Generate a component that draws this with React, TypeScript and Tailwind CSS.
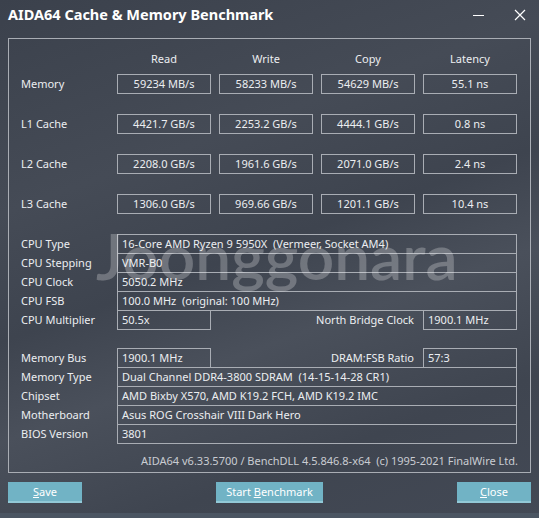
import React from "react";

const font = { fontFamily: '"Segoe UI", "Noto Sans", "Open Sans", sans-serif' };

const bench = [
  { name: "Memory", vals: ["59234 MB/s", "58233 MB/s", "54629 MB/s", "55.1 ns"] },
  { name: "L1 Cache", vals: ["4421.7 GB/s", "2253.2 GB/s", "4444.1 GB/s", "0.8 ns"] },
  { name: "L2 Cache", vals: ["2208.0 GB/s", "1961.6 GB/s", "2071.0 GB/s", "2.4 ns"] },
  { name: "L3 Cache", vals: ["1306.0 GB/s", "969.66 GB/s", "1201.1 GB/s", "10.4 ns"] },
];

const cpuRows = [
  ["CPU Type", "16-Core AMD Ryzen 9 5950X  (Vermeer, Socket AM4)"],
  ["CPU Stepping", "VMR-B0"],
  ["CPU Clock", "5050.2 MHz"],
  ["CPU FSB", "100.0 MHz  (original: 100 MHz)"],
];

const memRows = [
  ["Memory Type", "Dual Channel DDR4-3800 SDRAM  (14-15-14-28 CR1)"],
  ["Chipset", "AMD Bixby X570, AMD K19.2 FCH, AMD K19.2 IMC"],
  ["Motherboard", "Asus ROG Crosshair VIII Dark Hero"],
  ["BIOS Version", "3801"],
];

function Label({ children }: { children: React.ReactNode }) {
  return <div className="w-[96px] shrink-0 leading-[20px]">{children}</div>;
}

function InfoRow({ label, value, first }: { label: string; value: string; first?: boolean }) {
  return (
    <div className={`flex h-[20px] ${first ? "" : "-mt-px"}`}>
      <Label>{label}</Label>
      <div className="w-[400px] border border-[#a9adb4] pl-[4px] leading-[18px] whitespace-pre">{value}</div>
    </div>
  );
}

function Btn({ children, w }: { children: React.ReactNode; w: string }) {
  return (
    <div className={`${w} h-[21px] bg-[#71b3c5] border-b-2 border-[#92c9d7] text-white text-center leading-[19px]`}>
      {children}
    </div>
  );
}

export default function App() {
  return (
    <div
      className="relative w-[539px] h-[518px] overflow-hidden text-[11px] text-[#eceef1] bg-[linear-gradient(160deg,#3b414c_0%,#454b56_30%,#3e444f_48%,#4a505b_62%,#3f4550_80%,#434955_100%)]"
      style={font}
    >
      {/* title bar */}
      <div className="flex items-center h-[38px] pl-[8px] pr-[10px]">
        <div className="text-[14.5px] font-bold text-white pb-[8px]">AIDA64 Cache &amp; Memory Benchmark</div>
        <div className="ml-auto flex items-center gap-[30px] pb-[8px] text-white">
          <div className="w-[11px] h-px bg-white" />
          <svg width="12" height="12" viewBox="0 0 12 12" className="mr-[3px]">
            <path d="M1 1 L11 11 M11 1 L1 11" stroke="white" strokeWidth="1.2" />
          </svg>
        </div>
      </div>

      {/* main panel */}
      <div className="ml-[8px] w-[523px] h-[435px] border border-[#a9adb4] pl-[12px] pt-[11px]">
        <div className="flex h-[19px] items-center">
          <div className="w-[96px]" />
          <div className="flex gap-[8px]">
            {["Read", "Write", "Copy", "Latency"].map((h) => (
              <div key={h} className="w-[94px] text-center">{h}</div>
            ))}
          </div>
        </div>

        <div className="flex flex-col gap-[20px] mt-[5px]">
          {bench.map((r) => (
            <div key={r.name} className="flex h-[20px]">
              <Label>{r.name}</Label>
              <div className="flex gap-[8px]">
                {r.vals.map((v, i) => (
                  <div key={i} className="w-[94px] h-[20px] border border-[#a9adb4] text-center leading-[18px]">{v}</div>
                ))}
              </div>
            </div>
          ))}
        </div>

        <div className="mt-[20px]">
          {cpuRows.map((r, i) => (
            <InfoRow key={r[0]} label={r[0]} value={r[1]} first={i === 0} />
          ))}
          <div className="flex h-[20px] -mt-px">
            <Label>CPU Multiplier</Label>
            <div className="w-[94px] border border-[#a9adb4] pl-[4px] leading-[18px]">50.5x</div>
            <div className="w-[212px] text-right pr-[9px] leading-[20px]">North Bridge Clock</div>
            <div className="w-[94px] border border-[#a9adb4] pl-[4px] leading-[18px]">1900.1 MHz</div>
          </div>
        </div>

        <div className="mt-[18px]">
          <div className="flex h-[20px]">
            <Label>Memory Bus</Label>
            <div className="w-[94px] border border-[#a9adb4] pl-[4px] leading-[18px]">1900.1 MHz</div>
            <div className="w-[212px] text-right pr-[9px] leading-[20px]">DRAM:FSB Ratio</div>
            <div className="w-[94px] border border-[#a9adb4] pl-[4px] leading-[18px]">57:3</div>
          </div>
          {memRows.map((r) => (
            <InfoRow key={r[0]} label={r[0]} value={r[1]} />
          ))}
        </div>

        <div className="mt-[9px] pr-[12px] text-right text-[#c9ccd2] whitespace-pre">
          AIDA64 v6.33.5700 / BenchDLL 4.5.846.8-x64  (c) 1995-2021 FinalWire Ltd.
        </div>
      </div>

      {/* buttons */}
      <div className="flex items-start mt-[9px] pl-[8px] pr-[8px]">
        <Btn w="w-[74px]"><span className="underline">S</span>ave</Btn>
        <div className="ml-[134px]">
          <Btn w="w-[107px]">Start <span className="underline">B</span>enchmark</Btn>
        </div>
        <div className="ml-auto">
          <Btn w="w-[74px]"><span className="underline">C</span>lose</Btn>
        </div>
      </div>
      <div className="absolute left-0 right-0 bottom-0 h-[5px] bg-[#4b5562]" />

      {/* watermark */}
      <div
        className="absolute left-[96px] top-[224px] text-[64px] font-semibold leading-none text-white/25 pointer-events-none"
        style={{ fontFamily: 'Lato, "Open Sans", sans-serif' }}
      >
        Joonggonara
      </div>
    </div>
  );
}
